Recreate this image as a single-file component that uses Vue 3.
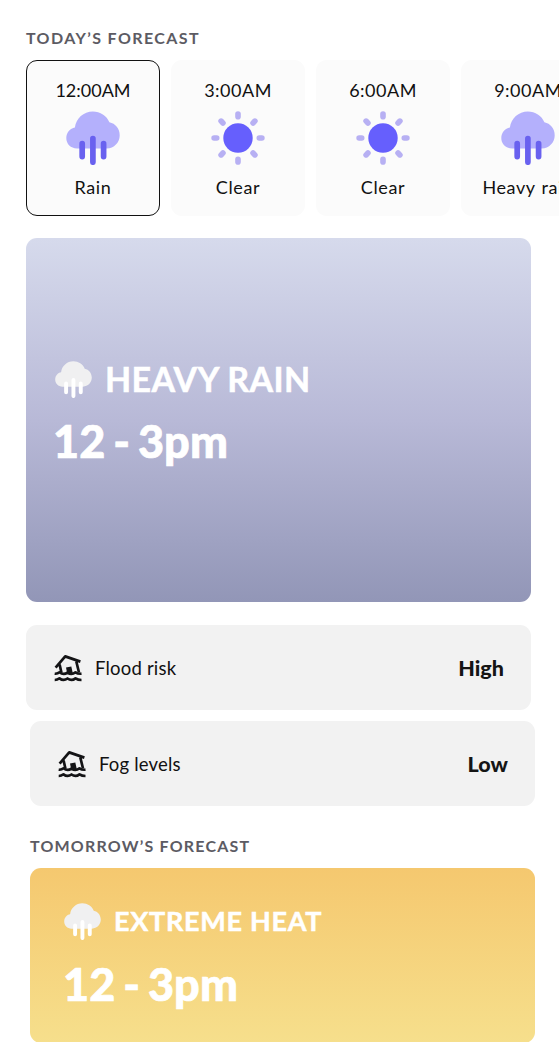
<script setup>
const hours = [
  { time: '12:00AM', label: 'Rain', icon: 'rain', active: true },
  { time: '3:00AM', label: 'Clear', icon: 'sun' },
  { time: '6:00AM', label: 'Clear', icon: 'sun' },
  { time: '9:00AM', label: 'Heavy rain', icon: 'rain' },
]
const risks = [
  { name: 'Flood risk', level: 'High', key: 'flood' },
  { name: 'Fog levels', level: 'Low', key: 'fog' },
]
const rays = [0, 45, 90, 135, 180, 225, 270, 315]
</script>

<template>
  <main class="page">
    <svg class="defs" aria-hidden="true">
      <symbol id="rain" viewBox="0 0 54 54">
        <path class="cloud" d="M11 37.400C4.700 37.400 0.300 32.900 0.300 27C0.300 21.500 4.100 17.200 8.900 16.400C9.900 7.300 17.700 0.400 26.800 0.400C34.300 0.400 40.600 4.600 43.400 11.300C49.400 12.500 53.700 17.800 53.700 24.200C53.700 31.500 48 37.400 40.800 37.400Z" />
        <path class="drops" d="M16.200 32.700V45.600M26.900 27.700V51.200M37.600 32.700V45.600" />
      </symbol>
      <symbol id="sun" viewBox="0 0 54 54">
        <circle class="core" cx="27" cy="27" r="14.700" />
        <rect v-for="r in rays" :key="r" class="ray" x="24.200" y="0.300" width="5.600" height="8.200" rx="2.800" :transform="`rotate(${r} 27 27)`" />
      </symbol>
      <symbol id="house" viewBox="0 0 28 28">
        <g class="house-lines">
          <path d="M1.600 13.600L11.200 2.400L26.400 7.600M5.600 10.500L7.400 18.500M22.300 7.500L25 18.500" />
          <path d="M0.700 19.700Q3.300 20.100 5.500 18.300Q9.500 21.500 13.500 18.600Q17.500 21.500 21.500 18.300Q24 20.100 27.500 19.700" />
          <path d="M0.700 26Q3.300 26 5.500 24.300Q9.500 27.300 13.500 24.500Q17.500 27.300 21.500 24.300Q24 26 27.500 26" />
        </g>
        <path class="door" d="M12 13.600L17.300 12.400L18.800 19.300L13.200 19.500Z" />
      </symbol>
    </svg>

    <h2 class="heading today">TODAY’S FORECAST</h2>
    <section class="hours">
      <article v-for="h in hours" :key="h.time" class="hour" :class="{ active: h.active }">
        <span class="time">{{ h.time }}</span>
        <svg class="weather"><use :href="'#' + h.icon" /></svg>
        <span class="label">{{ h.label }}</span>
      </article>
    </section>

    <section class="hero rainy">
      <div class="title-row">
        <svg class="mini"><use href="#rain" /></svg>
        <span class="title">HEAVY RAIN</span>
      </div>
      <div class="period">12 - 3pm</div>
    </section>

    <section class="risks">
      <div v-for="r in risks" :key="r.key" class="risk" :class="r.key">
        <svg class="house"><use href="#house" /></svg>
        <span class="name">{{ r.name }}</span>
        <strong class="level">{{ r.level }}</strong>
      </div>
    </section>

    <h2 class="heading tomorrow">TOMORROW’S FORECAST</h2>
    <section class="hero heat">
      <div class="title-row">
        <svg class="mini"><use href="#rain" /></svg>
        <span class="title">EXTREME HEAT</span>
      </div>
      <div class="period">12 - 3pm</div>
    </section>
  </main>
</template>

<style>
html, body { margin: 0; background: #fff; overflow: hidden; }
</style>

<style scoped>
.page {
  box-sizing: border-box;
  width: 559px;
  height: 1042px;
  padding: 28px 0 0 26px;
  overflow: hidden;
  background: #fff;
  color: #111;
  font-family: Lato, "Liberation Sans", sans-serif;
  white-space: nowrap;
}
.defs { display: block; width: 0; height: 0; }
.heading {
  margin: 0;
  height: 20px;
  line-height: 20px;
  font-size: 16px;
  font-weight: 700;
  letter-spacing: 1.200px;
  color: #5c5b63;
}
.today { letter-spacing: 1.400px; }
.hours { display: flex; gap: 11px; margin-top: 12px; }
.hour {
  box-sizing: border-box;
  flex: 0 0 134px;
  height: 156px;
  padding-top: 19px;
  display: flex;
  flex-direction: column;
  align-items: center;
  border-radius: 11px;
  background: #fbfbfb;
  font-size: 18px;
  line-height: 22px;
}
.hour.active { padding-top: 18px; border: 1px solid #111; }
.time { letter-spacing: 0.500px; }
.active .time { letter-spacing: 0; }
.label { letter-spacing: 0.600px; word-spacing: 1px; }
.weather { width: 54px; height: 54px; margin: 10px 0 11px; }
.cloud { fill: var(--cloud, #b4b0fc); }
.drops { stroke: var(--drop, #6961ef); stroke-width: 5.700; stroke-linecap: round; fill: none; }
.core { fill: #665ffd; }
.ray { fill: #b7b0f3; }
.hero { box-sizing: border-box; width: 505px; border-radius: 11px; color: #fff; font-weight: 700; }
.rainy { height: 364px; margin-top: 22px; padding: 121px 0 0 29px; background: linear-gradient(#d6daec, #b8b9d7 50%, #9296b7); }
.title-row { display: flex; align-items: center; height: 40px; }
.mini { width: 37px; height: 37px; margin-right: 13px; --cloud: #f0f0f1; --drop: #fff; }
.title { font-size: 34px; line-height: 40px; letter-spacing: 0.400px; -webkit-text-stroke: 0.500px #fff; }
.period {
  margin: 15px 0 0 -2px;
  height: 54px;
  line-height: 54px;
  font-size: 45px;
  font-weight: 900;
  word-spacing: -3px;
  letter-spacing: 0.100px;
  -webkit-text-stroke: 0.700px #fff;
}
.risks { display: flex; flex-direction: column; gap: 11px; margin-top: 23px; }
.risk {
  box-sizing: border-box;
  width: 505px;
  height: 85px;
  padding: 0 27px 0 28px;
  display: flex;
  align-items: center;
  border-radius: 11px;
  background: #f2f2f2;
}
.fog { margin-left: 4px; }
.house { width: 28px; height: 28px; margin-right: 13px; }
.house-lines { fill: none; stroke: #141416; stroke-width: 2.700; stroke-linejoin: round; stroke-linecap: butt; }
.door { fill: #141416; }
.name { font-size: 18.500px; letter-spacing: 0.200px; color: #111; }
.level { margin-left: auto; font-size: 21.500px; font-weight: 900; color: #151515; }
.tomorrow { margin: 30px 0 0 4px; }
.heat { margin: 12px 0 0 4px; height: 175px; padding: 33px 0 0 34px; background: linear-gradient(#f5c86f, #f6df8c); }
.heat .title { font-size: 27px; letter-spacing: 0.700px; }
.heat .period { margin: 16px 0 0 -1px; }
</style>
